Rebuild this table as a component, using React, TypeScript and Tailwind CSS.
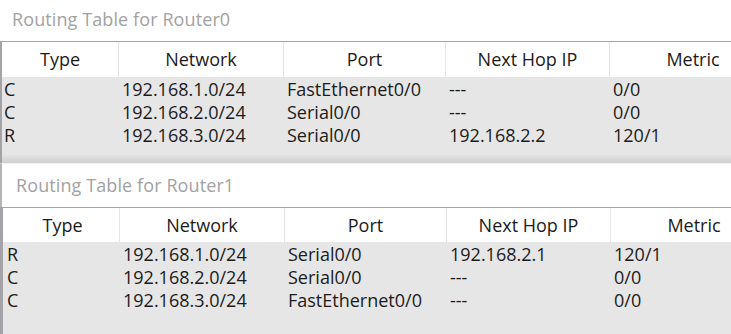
import React from "react";

type Row = [string, string, string, string, string];

const router0: Row[] = [
  ["C", "192.168.1.0/24", "FastEthernet0/0", "---", "0/0"],
  ["C", "192.168.2.0/24", "Serial0/0", "---", "0/0"],
  ["R", "192.168.3.0/24", "Serial0/0", "192.168.2.2", "120/1"],
];

const router1: Row[] = [
  ["R", "192.168.1.0/24", "Serial0/0", "192.168.2.1", "120/1"],
  ["C", "192.168.2.0/24", "Serial0/0", "---", "0/0"],
  ["C", "192.168.3.0/24", "FastEthernet0/0", "---", "0/0"],
];

const headers = ["Type", "Network", "Port", "Next Hop IP", "Metric"];
// column widths; the last one runs past the window edge
const cols = ["w-[117px]", "w-[165px]", "w-[162px]", "w-[164px]", "w-[166px]"];

function RoutingTable({ rows, second }: { rows: Row[]; second?: boolean }) {
  return (
    <div className={second ? "border-l-[3px] border-[#a3a3a8]" : "border-l-2 border-[#a3a3a8]"}>
      <div className={`flex ${second ? "h-[35px]" : "h-[36px]"} bg-white border-t border-[#a6a6ad] text-[#1b1b1b]`}>
        {headers.map((h, i) => (
          <div
            key={h}
            className={`${cols[i]} shrink-0 flex items-center justify-center ${i < 4 ? "border-r border-[#e3e3e3]" : ""} ${i === 0 && second ? "pl-[3px]" : ""}`}
          >
            {h}
          </div>
        ))}
      </div>
      <div className="bg-[#e6e6e6] text-[#1b1b1b]">
        {rows.map((r, ri) => (
          <div key={ri} className="flex h-[23px] items-center leading-none">
            {r.map((c, ci) => (
              <div key={ci} className={`${cols[ci]} shrink-0 ${ci === 0 ? (second ? "pl-[4px]" : "pl-[2px]") : "pl-[3px]"}`}>
                {c}
              </div>
            ))}
          </div>
        ))}
        {second ? <div className="h-[25px]" /> : <div className="h-[9px]" />}
      </div>
      {!second && <div className="h-[8px] bg-gradient-to-b from-[#e3e3e3] to-[#cfcfcf]" />}
    </div>
  );
}

export default function App() {
  return (
    <div
      className="w-[731px] h-[334px] bg-white overflow-hidden text-[18px]"
      style={{ fontFamily: "'Open Sans', 'Noto Sans', sans-serif" }}
    >
      <div className="h-[41px] flex items-center pl-[12px] pb-[3px] tracking-[0.1px] text-[#a2a2a2]">Routing Table for Router0</div>
      <RoutingTable rows={router0} />
      <div className="h-[44px] flex items-center pl-[14px] tracking-[0.1px] border-l-2 border-[#b5b5b5] border-t border-t-[#f0f0f0] text-[#a2a2a2]">
        Routing Table for Router1
      </div>
      <RoutingTable rows={router1} second />
    </div>
  );
}
